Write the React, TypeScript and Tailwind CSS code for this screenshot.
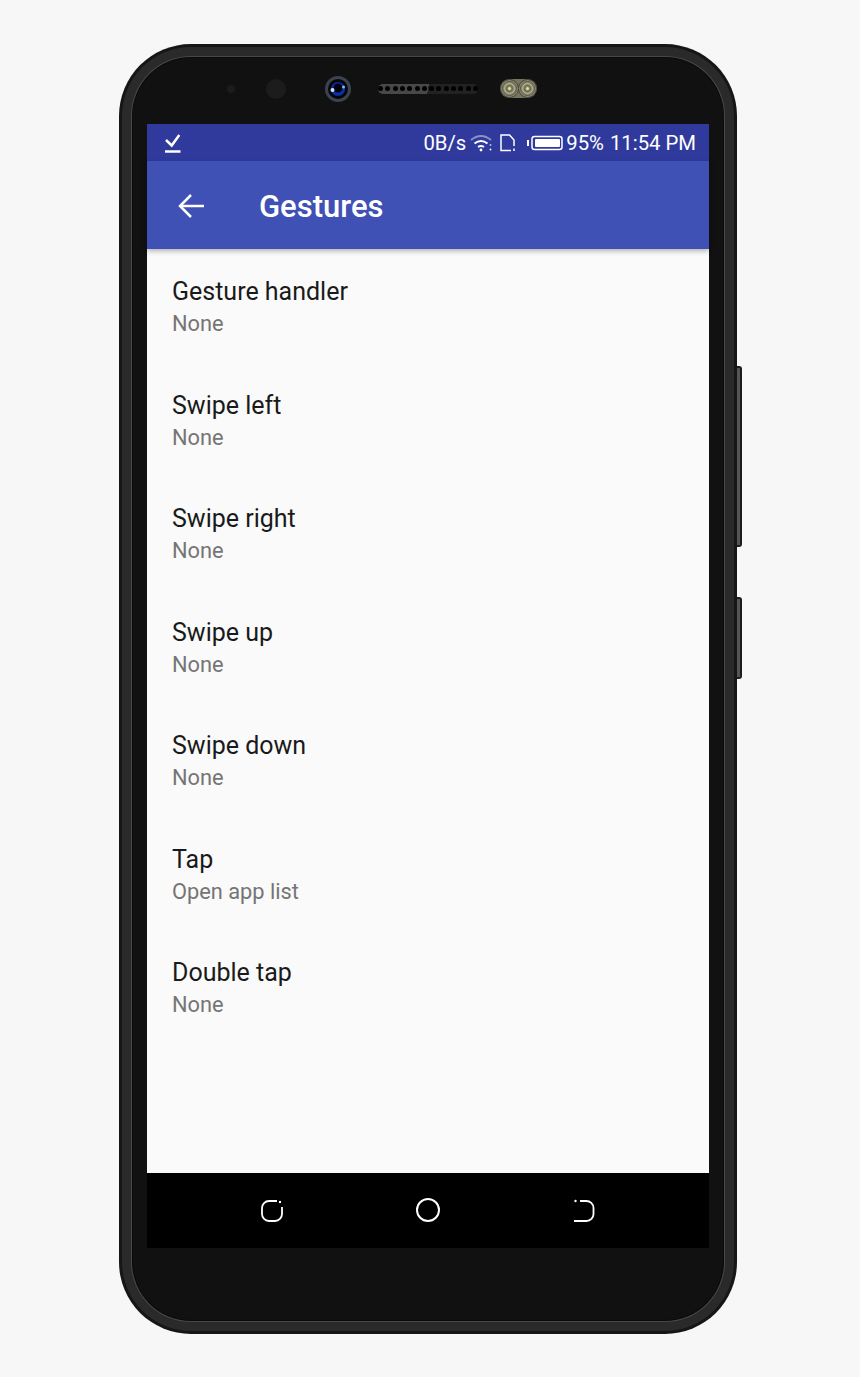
const rows = [
  ['Gesture handler', 'None'],
  ['Swipe left', 'None'],
  ['Swipe right', 'None'],
  ['Swipe up', 'None'],
  ['Swipe down', 'None'],
  ['Tap', 'Open app list'],
  ['Double tap', 'None'],
];

const Flash = () => (
  <svg className="ml-[22px]" width="37" height="19" viewBox="0 0 37 19" fill="none">
    <rect width="37" height="19" rx="9.500" fill="#77755f" />
    {[9.5, 27.5].map(cx => (
      <g key={cx}>
        <circle cx={cx} cy="9.500" r="9" fill="#8a8870" stroke="#3a392f" strokeWidth="0.800" />
        <circle cx={cx} cy="9.500" r="7" stroke="#4e4d40" strokeWidth="0.800" />
        <circle cx={cx} cy="9.500" r="5" stroke="#c4c194" strokeWidth="0.800" />
        <circle cx={cx} cy="9.500" r="3" stroke="#5c5a45" strokeWidth="0.800" />
        <circle cx={cx} cy="9.500" r="1.500" fill="#e6dd8a" />
      </g>
    ))}
  </svg>
);

const App = () => {
  return (
    <div className="w-[860px] h-[1377px] bg-[#f7f7f7] pl-[119px] pt-[44px] overflow-hidden font-['Roboto',sans-serif]">
      <div className="relative w-[618px] h-[1290px]">
        <div className="absolute left-[617px] top-[322px] w-[6px] h-[181px] rounded-r-[3px] bg-[#555555] border-y-2 border-r-2 border-[#1c1c1c]" />
        <div className="absolute left-[617px] top-[553px] w-[6px] h-[82px] rounded-r-[3px] bg-[#555555] border-y-2 border-r-2 border-[#1c1c1c]" />

        <div className="relative w-full h-full rounded-[72px] bg-[#161616] p-[3px]">
          <div className="w-full h-full rounded-[69px] bg-[#2a2a2a] p-[9px]">
            <div className="w-full h-full rounded-[60px] bg-[#484848] p-[1px]">
              <div className="w-full h-full rounded-[59px] bg-[#0a0a0a] p-[1px]">
                <div className="w-full h-full rounded-[58px] bg-[#111111] px-[14px] flex flex-col">
                  <div className="h-[66px] shrink-0 flex items-center pb-[5px]">
                    <div className="w-[88px] shrink-0 pl-[80px]">
                      <div className="w-[8px] h-[8px] rounded-full bg-[#1c1c1c]" />
                    </div>
                    <div className="w-[20px] h-[20px] rounded-full bg-[#1c1c1c] ml-[31px]" />
                    <svg className="ml-[39px]" width="26" height="26" viewBox="0 0 26 26">
                      <circle cx="13" cy="13" r="13" fill="#3d434c" />
                      <circle cx="13" cy="13" r="10" fill="#05060c" />
                      <circle cx="13" cy="13" r="7" fill="#0c2fa8" />
                      <circle cx="13" cy="12" r="4.500" fill="#02030a" />
                      <circle cx="7.500" cy="14" r="2" fill="#cfe4ff" />
                      <circle cx="18.500" cy="11" r="1.500" fill="#6fc3f5" />
                    </svg>
                    <div className="w-[100px] h-[10px] rounded-full bg-[linear-gradient(100deg,#484848_50%,#222222_50%)] ml-[27px] flex items-center justify-center gap-[2.300px]">
                      {Array.from({ length: 14 }).map((_, i) => (
                        <div key={i} className="w-[5px] h-[5px] rounded-full bg-black" />
                      ))}
                    </div>
                    <Flash />
                  </div>

                  <div className="flex-1 flex flex-col min-h-0">
                    <div className="h-[37px] shrink-0 bg-[#2f3a9c] flex items-center pl-[18px] pr-[13px] pt-[1px] text-white text-[20.300px]">
                      <svg width="16" height="19" viewBox="0 0 16 19" fill="none" stroke="white" strokeWidth="2.500">
                        <path d="M1 6 L6.700 11.500 L14.300 1" />
                        <path d="M0 17.500 H15.500" />
                      </svg>
                      <div className="flex-1" />
                      <span>0B/s</span>
                      <svg className="ml-[4px]" width="22" height="18" viewBox="0 0 22 18" fill="none" stroke="white" strokeWidth="2">
                        <path d="M1 6 Q11 -2 21 6" opacity="0.45" />
                        <path d="M4.500 9.500 Q11 4.500 17.500 9.500" />
                        <path d="M8 13 Q11 11 14 13" />
                        <circle cx="11" cy="16" r="1.400" fill="white" stroke="none" />
                        <circle cx="20.500" cy="11" r="0.900" fill="white" stroke="none" opacity="0.7" />
                        <circle cx="20.500" cy="15.500" r="0.900" fill="white" stroke="none" />
                      </svg>
                      <svg className="ml-[8px]" width="16" height="18" viewBox="0 0 16 18" fill="none" stroke="white" strokeWidth="1.500">
                        <path d="M14 12 V6 L9.500 1 H1 V16.500 H11" />
                        <path d="M14 14.500 V17" />
                      </svg>
                      <svg className="ml-[11px]" width="36" height="18" viewBox="0 0 36 18" fill="none">
                        <rect x="0" y="6" width="2" height="6" fill="white" />
                        <rect x="5" y="2.500" width="30" height="13" rx="2.500" stroke="white" strokeWidth="1.500" />
                        <rect x="8" y="5" width="25" height="8" rx="1" fill="white" />
                      </svg>
                      <span className="ml-[3px]">95%</span>
                      <span className="ml-[6px]">11:54 PM</span>
                    </div>
                    <div className="h-[88px] shrink-0 bg-[#3f51b5] flex items-center pl-[31px] pt-[1px] shadow-[0_2px_5px_rgba(0,0,0,0.3)] relative">
                      <svg width="26" height="26" viewBox="0 0 26 26" fill="none" stroke="white" strokeWidth="2.500">
                        <path d="M26 13 H3" />
                        <path d="M13 2 L2 13 L13 24" />
                      </svg>
                      <span className="ml-[55px] mt-[3px] text-white text-[31px] font-medium">Gestures</span>
                    </div>
                    <div className="flex-1 bg-[#fafafa] pl-[25px] pt-[25px]">
                      {rows.map(([title, sub]) => (
                        <div key={title} className="h-[113.500px]">
                          <div className="text-[25px] leading-[36px] text-[#1a1a1a]">{title}</div>
                          <div className="text-[21.800px] leading-[28px] text-[#757575]">{sub}</div>
                        </div>
                      ))}
                    </div>
                    <div className="h-[75px] shrink-0 bg-black flex items-center pb-[1px] text-white">
                      <div className="w-[137px] shrink-0 flex justify-end">
                        <svg width="24" height="24" viewBox="0 0 24 24" fill="none" stroke="white" strokeWidth="1.800">
                          <path d="M17 3 H9 A7 7 0 0 0 2 10 V16 A7 7 0 0 0 9 23 H15 A7 7 0 0 0 22 16 V9" />
                          <circle cx="20" cy="4" r="1.200" fill="white" stroke="none" />
                        </svg>
                      </div>
                      <div className="ml-[132px] w-[24px] h-[24px] rounded-full border-2 border-white" />
                      <div className="ml-[132px]">
                        <svg width="24" height="24" viewBox="0 0 24 24" fill="none" stroke="white" strokeWidth="1.800">
                          <path d="M8 3 H14 A7 7 0 0 1 21.500 10 V15.500 A7 7 0 0 1 14 23 H2" />
                          <circle cx="3.500" cy="3" r="1.200" fill="white" stroke="none" />
                        </svg>
                      </div>
                    </div>
                  </div>
                  <div className="h-[72px] shrink-0" />
                </div>
              </div>
            </div>
          </div>
        </div>
      </div>
    </div>
  );
};

export default App;
